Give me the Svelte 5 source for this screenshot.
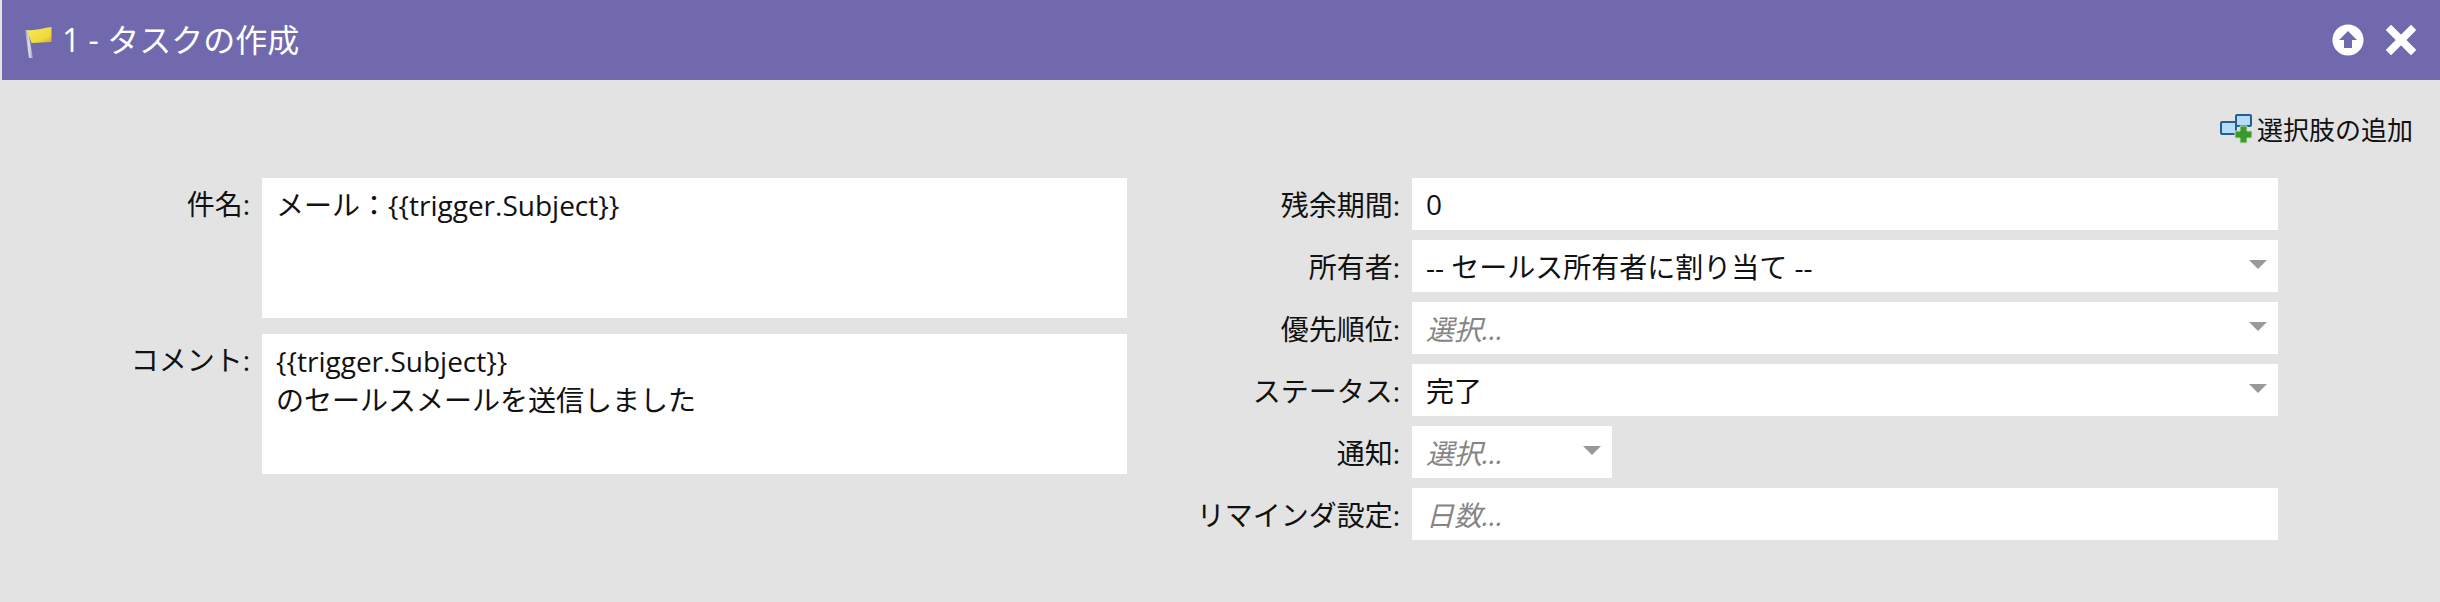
<script>
  const rightRows = [
    { label: '残余期間', value: '0' },
    { label: '所有者', value: '-- セールス所有者に割り当て --', select: true },
    { label: '優先順位', placeholder: '選択...', select: true },
    { label: 'ステータス', value: '完了', select: true },
    { label: '通知', placeholder: '選択...', select: true, small: true },
    { label: 'リマインダ設定', placeholder: '日数...' }
  ];
</script>

<div class="panel">
  <header class="title-bar">
    <div class="title">
      <svg class="flag" width="28" height="32" viewBox="0 0 28 32">
        <defs>
          <linearGradient id="flagFill" x1="0" y1="0" x2="1" y2="1">
            <stop offset="0" stop-color="#f8ea55" />
            <stop offset="0.7" stop-color="#efd93c" />
            <stop offset="1" stop-color="#c9a92a" />
          </linearGradient>
          <linearGradient id="poleFill" x1="0" y1="0" x2="1" y2="0">
            <stop offset="0" stop-color="#8f96ad" />
            <stop offset="0.5" stop-color="#dfe2ea" />
            <stop offset="1" stop-color="#8f96ad" />
          </linearGradient>
        </defs>
        <path d="M1 3 L4 3 L9 31 L5 31 Z" fill="url(#poleFill)" />
        <path d="M3 3 C11 4 19 1 27.5 0 L27.5 15 C21 15 14 16 7.5 16 Z" fill="url(#flagFill)" />
      </svg>
      <span class="title-text">1 - タスクの作成</span>
    </div>
    <div class="title-actions">
      <svg width="32" height="32" viewBox="0 0 32 32">
        <circle cx="16" cy="16" r="15.5" fill="#fff" />
        <path d="M16 7 L25 16 L20 16 L20 24 L12 24 L12 16 L7 16 Z" fill="#7069ae" />
      </svg>
      <svg width="30" height="30" viewBox="0 0 30 30">
        <path d="M5 5 L25 25 M25 5 L5 25" stroke="#fff" stroke-width="7.5" stroke-linecap="square" />
      </svg>
    </div>
  </header>

  <div class="content">
    <div class="toolbar">
      <button class="add-choice">
        <svg width="32" height="30" viewBox="0 0 32 30">
          <rect x="16" y="1" width="15" height="11" rx="1" fill="#b5dcf6" stroke="#245f94" stroke-width="2" />
          <rect x="1" y="8" width="15" height="12" rx="1" fill="#b5dcf6" stroke="#245f94" stroke-width="2" />
          <path d="M20 12 h7 v5 h5 v7 h-5 v5 h-7 v-5 h-5 v-7 h5 Z" fill="#3c9a2c" stroke="#bfe0b6" stroke-width="1" />
        </svg>
        選択肢の追加
      </button>
    </div>

    <div class="form">
      <div class="col-left">
        <div class="field">
          <span class="label">件名:</span>
          <div class="area first">メール：&#123;&#123;trigger.Subject&#125;&#125;</div>
        </div>
        <div class="field">
          <span class="label">コメント:</span>
          <div class="area">&#123;&#123;trigger.Subject&#125;&#125;<br />のセールスメールを送信しました</div>
        </div>
      </div>

      <div class="col-right">
        {#each rightRows as row}
          <div class="row">
            <span class="label">{row.label}:</span>
            <div class="input" class:small={row.small}>
              {#if row.value}
                <span>{row.value}</span>
              {:else}
                <span class="placeholder">{row.placeholder}</span>
              {/if}
              {#if row.select}
                <i class="arrow"></i>
              {/if}
            </div>
          </div>
        {/each}
      </div>
    </div>
  </div>
</div>

<style>
  :global(body) {
    margin: 0;
    background: #e3e3e3;
  }

  .panel {
    width: 2440px;
    height: 602px;
    overflow: hidden;
    background: #e3e3e3;
    color: #111;
    font-family: "Open Sans", "Noto Sans CJK JP", sans-serif;
    font-size: 28px;
  }

  .title-bar {
    display: flex;
    justify-content: space-between;
    align-items: center;
    height: 80px;
    margin-left: 2px;
    padding: 0 24px 0 22px;
    background: #7069ae;
    color: #fff;
  }

  .title {
    display: flex;
    align-items: center;
    gap: 10px;
    font-size: 32px;
  }

  .title-text {
    padding-bottom: 4px;
  }

  .flag {
    margin-top: 6px;
  }

  .title-actions {
    display: flex;
    align-items: center;
    gap: 22px;
  }

  .content {
    padding-top: 28px;
  }

  .toolbar {
    display: flex;
    justify-content: flex-end;
    height: 70px;
    padding-right: 27px;
  }

  .add-choice {
    display: flex;
    align-items: center;
    gap: 5px;
    height: 42px;
    padding: 0;
    border: none;
    background: none;
    color: #111;
    font: inherit;
    font-size: 26px;
  }

  .form {
    display: flex;
  }

  .col-left {
    display: flex;
    flex-direction: column;
    gap: 16px;
    width: 1127px;
  }

  .field {
    display: flex;
    gap: 12px;
  }

  .field .label {
    width: 250px;
    padding-top: 5px;
    text-align: right;
  }

  .area {
    box-sizing: border-box;
    width: 865px;
    height: 140px;
    padding: 8px 14px;
    background: #fff;
    line-height: 39px;
  }

  .col-right {
    display: flex;
    flex-direction: column;
    gap: 10px;
  }

  .row {
    display: flex;
    align-items: center;
    gap: 12px;
  }

  .row .label {
    width: 273px;
    text-align: right;
    white-space: nowrap;
  }

  .input {
    position: relative;
    box-sizing: border-box;
    display: flex;
    align-items: center;
    width: 866px;
    height: 52px;
    padding: 0 14px;
    background: #fff;
  }

  .input.small {
    width: 200px;
  }

  .placeholder {
    color: #858585;
    font-style: italic;
  }

  .arrow {
    position: absolute;
    top: 20px;
    right: 11px;
    width: 0;
    height: 0;
    border-left: 9px solid transparent;
    border-right: 9px solid transparent;
    border-top: 9px solid #999;
  }
</style>
